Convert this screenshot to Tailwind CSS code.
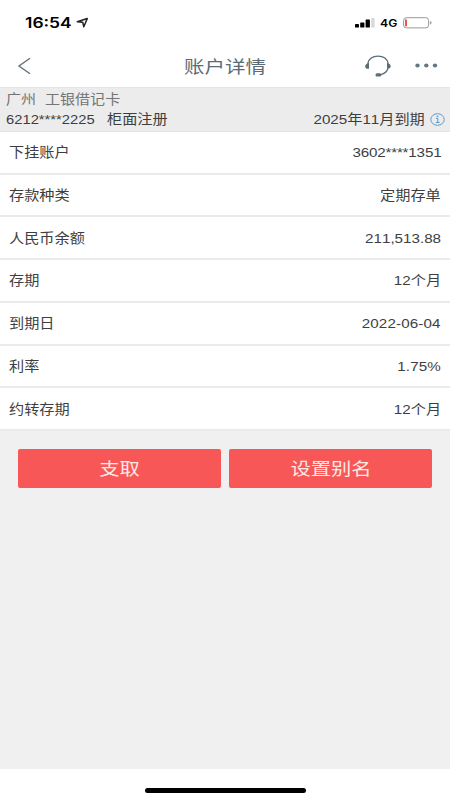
<!DOCTYPE html>
<html lang="zh-CN">
<head>
<meta charset="utf-8">
<title>账户详情</title>
<script src="https://cdn.jsdelivr.net/npm/@tailwindcss/browser@4"></script>
</head>
<body class="w-[450px] h-[800px] overflow-hidden bg-white flex flex-col font-['Liberation_Sans','Noto_Sans_CJK_SC',sans-serif] [font-kerning:none] text-[13.2px] leading-5 text-[#3e3e3e] whitespace-nowrap">
  <header class="h-[87px] shrink-0 flex flex-col">
    <div class="h-[44px] flex items-center justify-between pt-[1px] pl-[25px] pr-[18px] text-black">
      <div class="flex items-center">
        <div class="w-[47px] pt-[1px]"><span class="inline-block origin-left scale-x-[1.22] font-['Inter',sans-serif] font-semibold text-[14.3px]">16:54</span></div>
        <svg class="ml-[4px] w-[13px] h-[12px]" viewBox="0 0 13 12" fill="none" stroke="#222" stroke-width="1.5" stroke-linejoin="round"><path d="M1.300 4.800 11.300 1.500 7.800 9.800 6.700 5.200Z"/></svg>
      </div>
      <div class="flex items-center">
        <svg class="w-[20px] h-[10px]" viewBox="0 0 20 10"><rect x="0" y="6" width="4" height="3.600" rx=".6"/><rect x="5.200" y="4.400" width="4.200" height="5.200" rx=".6"/><rect x="10.600" y="1.400" width="4.300" height="8.200" rx=".6"/><rect x="16.200" y="0" width="3.400" height="9.600" rx=".6" fill="#d8d8d8"/></svg>
        <div class="ml-[5px] w-[23px] pt-[1px]"><span class="inline-block origin-left scale-x-[1.13] font-['Inter',sans-serif] font-semibold text-[10.8px]">4G</span></div>
        <svg class="w-[29px] h-[12px]" viewBox="0 0 29 12" fill="none"><rect x=".6" y=".7" width="25" height="10.200" rx="2.800" stroke="#999" stroke-width="1"/><rect x="2" y="2.200" width="2" height="7.200" rx=".8" fill="#e8574c"/><path d="M27.200 4v3.600q1.300-.5 1.300-1.800T27.200 4Z" fill="#888"/></svg>
      </div>
    </div>
    <div class="h-[43px] grid grid-cols-[120px_1fr_120px] items-center">
      <svg class="ml-[17px] w-[15px] h-[18px]" viewBox="0 0 15 18" fill="none" stroke="#61717a" stroke-width="1.400"><path d="M13 1.200 2 9l11 7.800"/></svg>
      <h1 class="pt-[2px] text-center text-[#5d6b76] text-[17.5px] leading-6"><span class="inline-block scale-x-[1.17]">账户详情</span></h1>
      <div class="flex items-center justify-end pr-[12px]">
        <svg class="w-[28px] h-[22px]" viewBox="0 0 28 22" fill="none" stroke="#5b6e76" stroke-width="1.300"><path d="M3.800 8.500C4.800 4 8.800 1.200 14 1.200s9.200 2.800 10.200 7.300M24 13.500C23 16.600 20.500 18.700 16.800 19.600"/><path d="M5 8v5.800C2.300 14.200 1 12.800 1.200 11.200S2.800 8.200 5 8ZM23 8v5.800c2.600.2 3.800-1.200 3.700-2.800S25.200 8.200 23 8Z" fill="#5b6e76" stroke="none"/><rect x="11.500" y="18.300" width="5.800" height="3.200" rx="1.500" fill="#5b6e76" stroke="none"/></svg>
        <svg class="ml-[23px] w-[23px] h-[5px]" viewBox="0 0 23 5" fill="#647784"><ellipse cx="2.500" cy="2.500" rx="2.200" ry="1.900"/><ellipse cx="11.300" cy="2.500" rx="2.200" ry="1.900"/><ellipse cx="20" cy="2.500" rx="2.200" ry="1.900"/></svg>
      </div>
    </div>
  </header>

  <section class="h-[45px] shrink-0 bg-[#ececec] border-t border-b border-[#e4e4e4] pl-[6px] pr-[5px] pt-[2px]">
    <div class="h-[20px] flex text-[#757575]">
      <div class="w-[39px]"><span class="inline-block origin-left scale-x-[1.14]">广州</span></div>
      <span class="inline-block origin-left scale-x-[1.14]">工银借记卡</span>
    </div>
    <div class="h-[20px] flex items-center">
      <div class="w-[101px]"><span class="inline-block origin-left scale-x-[1.12]">6212****2225</span></div>
      <span class="inline-block origin-left scale-x-[1.15]">柜面注册</span>
      <span class="ml-auto inline-block origin-right scale-x-[1.15]">2025年11月到期</span>
      <svg class="ml-[5px] mb-[2px] w-[15px] h-[13px]" viewBox="0 0 15 13" fill="none" stroke="#5d9cc9" stroke-width="1"><ellipse cx="7.500" cy="6.500" rx="6.700" ry="5.800"/><path d="M6 5.400h1.800v4M5.800 9.500h3.800"/><ellipse cx="7.500" cy="3.400" rx=".9" ry=".8" fill="#5d9cc9" stroke="none"/></svg>
    </div>
  </section>

  <main class="h-[299px] shrink-0 grid grid-rows-7 [&>div]:flex [&>div]:items-center [&>div]:justify-between [&>div]:pt-[2px] [&>div]:pl-[9px] [&>div]:pr-[9px] [&>div]:border-b-2 [&>div]:border-[#ebebeb] [&_span]:inline-block [&_span]:scale-x-[1.15] [&_span:first-child]:origin-left [&_span:last-child]:origin-right">
    <div><span>下挂账户</span><span class="tracking-[-0.15px]">3602****1351</span></div>
    <div><span>存款种类</span><span>定期存单</span></div>
    <div><span>人民币余额</span><span>211,513.88</span></div>
    <div><span>存期</span><span>12个月</span></div>
    <div><span>到期日</span><span class="tracking-[0.12px]">2022-06-04</span></div>
    <div><span>利率</span><span class="tracking-[0.12px]">1.75%</span></div>
    <div><span>约转存期</span><span>12个月</span></div>
  </main>

  <section class="flex-1 bg-[#f0f0f0] pt-[18px] px-[18px]">
    <div class="grid grid-cols-2 gap-[8px] text-[17.5px] text-[#ffe9e5]">
      <button class="h-[39px] rounded-[2px] bg-[#f75857] pt-[1px]"><span class="inline-block scale-x-[1.16]">支取</span></button>
      <button class="h-[39px] rounded-[2px] bg-[#f75857] pt-[1px]"><span class="inline-block scale-x-[1.16]">设置别名</span></button>
    </div>
  </section>

  <footer class="h-[31px] shrink-0 flex justify-center pt-[19px]">
    <div class="w-[161px] h-[5px] rounded-full bg-black"></div>
  </footer>
</body>
</html>
